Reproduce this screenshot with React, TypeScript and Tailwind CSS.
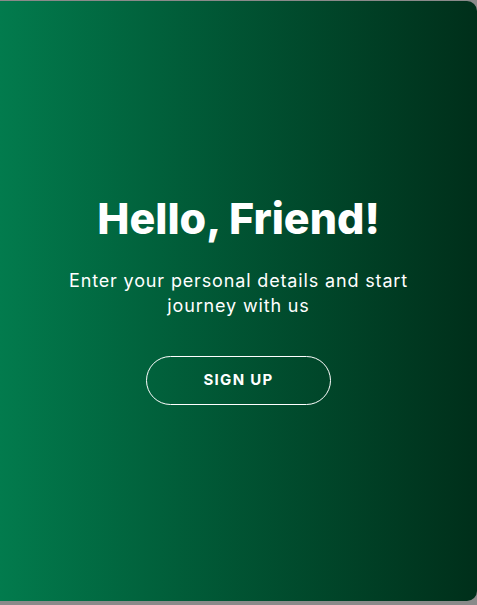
export default function App() {
  return (
    <div className="h-[605px] w-[477px] bg-[#8a8a8a] pt-px">
      <div className="flex h-[600px] w-full flex-col items-center justify-center rounded-r-[10px] bg-gradient-to-r from-[#027b4d] to-[#002f1a] text-white [font-family:Inter,'Noto_Sans',sans-serif]">
        <h1 className="text-[43px] font-extrabold leading-none">Hello, Friend!</h1>
        <p className="mt-[28px] w-[380px] text-center text-[18px] leading-[25px] tracking-[0.85px]">
          Enter your personal details and start journey with us
        </p>
        <button className="mt-[38px] flex h-[49px] w-[185px] items-center justify-center rounded-full border border-white text-[15px] font-bold tracking-[1.3px]">
          SIGN UP
        </button>
      </div>
    </div>
  );
}
